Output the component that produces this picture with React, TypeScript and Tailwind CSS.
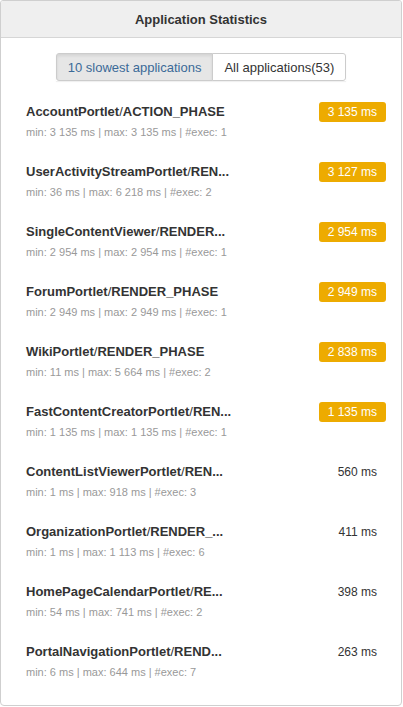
import React from "react";

interface AppStat {
  name: string;
  phase: string;
  time: string;
  min: string;
  max: string;
  exec: number;
  slow: boolean;
}

const stats: AppStat[] = [
  { name: "AccountPortlet", phase: "ACTION_PHASE", time: "3 135 ms", min: "3 135 ms", max: "3 135 ms", exec: 1, slow: true },
  { name: "UserActivityStreamPortlet", phase: "REN...", time: "3 127 ms", min: "36 ms", max: "6 218 ms", exec: 2, slow: true },
  { name: "SingleContentViewer", phase: "RENDER...", time: "2 954 ms", min: "2 954 ms", max: "2 954 ms", exec: 1, slow: true },
  { name: "ForumPortlet", phase: "RENDER_PHASE", time: "2 949 ms", min: "2 949 ms", max: "2 949 ms", exec: 1, slow: true },
  { name: "WikiPortlet", phase: "RENDER_PHASE", time: "2 838 ms", min: "11 ms", max: "5 664 ms", exec: 2, slow: true },
  { name: "FastContentCreatorPortlet", phase: "REN...", time: "1 135 ms", min: "1 135 ms", max: "1 135 ms", exec: 1, slow: true },
  { name: "ContentListViewerPortlet", phase: "REN...", time: "560 ms", min: "1 ms", max: "918 ms", exec: 3, slow: false },
  { name: "OrganizationPortlet", phase: "RENDER_...", time: "411 ms", min: "1 ms", max: "1 113 ms", exec: 6, slow: false },
  { name: "HomePageCalendarPortlet", phase: "RE...", time: "398 ms", min: "54 ms", max: "741 ms", exec: 2, slow: false },
  { name: "PortalNavigationPortlet", phase: "REND...", time: "263 ms", min: "6 ms", max: "644 ms", exec: 7, slow: false },
];

const StatRow: React.FC<{ stat: AppStat }> = ({ stat }) => (
  <div className="h-[60px] pt-[5px]">
    <div className="flex items-start justify-between">
      <div className="whitespace-nowrap text-[13px] leading-5 text-[#333]">
        <b>{stat.name}</b>/<b>{stat.phase}</b>
      </div>
      {stat.slow ? (
        <span className="h-5 rounded-[3px] bg-[#edab00] px-[9px] text-[12px] leading-5 text-white">
          {stat.time}
        </span>
      ) : (
        <span className="h-5 pr-[9px] text-[12px] leading-5 text-[#333]">{stat.time}</span>
      )}
    </div>
    <div className="mt-[3px] text-[11px] leading-[14px] text-[#999]">
      min: {stat.min} | max: {stat.max} | #exec: {stat.exec}
    </div>
  </div>
);

export default function App() {
  return (
    <div className="h-[707px] w-[403px] bg-white font-['Liberation_Sans',Arial,sans-serif]">
      <div className="h-[706px] w-[402px] overflow-hidden rounded-b-[4px] rounded-t-[3px] border border-[#cfcfcf]">
        {/* Header */}
        <div className="flex h-[37px] items-center justify-center border-b border-[#d6d6d6] bg-[#efefef] pt-px text-[13px] font-bold text-[#333]">
          Application Statistics
        </div>

        {/* Toggle */}
        <div className="mt-[15px] flex justify-center">
          <div className="flex h-[28px] text-[13px] shadow-[0_1px_1px_rgba(0,0,0,0.06)]">
            <button className="rounded-l-[3px] border border-[#cccccc] bg-[#e6e6e6] px-[11px] pt-px text-[#3b6a98] shadow-[inset_0_2px_3px_rgba(0,0,0,0.08)]">
              10 slowest applications
            </button>
            <button className="-ml-px rounded-r-[3px] border border-[#cccccc] bg-white px-[11px] pt-px text-[#333]">
              All applications(53)
            </button>
          </div>
        </div>

        {/* List */}
        <div className="mt-[16px] pl-[25px] pr-[15px]">
          {stats.map((s) => (
            <StatRow key={s.name} stat={s} />
          ))}
        </div>
      </div>
    </div>
  );
}
